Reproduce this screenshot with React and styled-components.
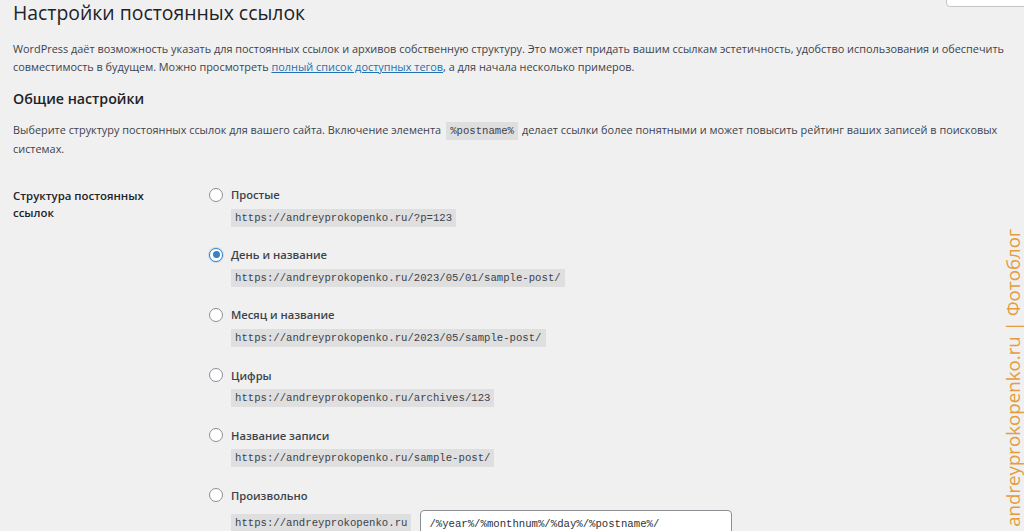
import React from 'react';
import styled, { createGlobalStyle } from 'styled-components';

const COLORS = {
  bg: '#f0f0f1',
  text: '#3c434a',
  heading: '#1d2327',
  link: '#2271b1',
  code: 'rgba(0, 0, 0, 0.07)',
  border: '#8c8f94',
  radio: '#3582c4',
  mark: '#e59c3e',
};

const GlobalStyle = createGlobalStyle`
  html, body {
    margin: 0;
    background: ${COLORS.bg};
  }
  body {
    font-family: "Open Sans", "Noto Sans", sans-serif;
    font-size: 10.9px;
    color: ${COLORS.text};
    overflow: hidden;
  }
`;

const Page = styled.div`
  position: relative;
  height: 531px;
  padding: 1px 18px 0 13px;
  overflow: hidden;
`;

const HelpTab = styled.div`
  position: absolute;
  top: -1px;
  right: -2px;
  width: 78px;
  height: 6px;
  background: #fff;
  border: 1px solid #c3c4c7;
  border-radius: 0 0 0 4px;
`;

const Title = styled.h1`
  margin: 0;
  font-size: 19.4px;
  font-weight: 400;
  line-height: 24px;
  color: ${COLORS.heading};
`;

const Text = styled.p`
  margin: ${({ top = 0 }) => top}px 0 0;
  line-height: 17.5px;
  white-space: nowrap;
`;

const Link = styled.a`
  color: ${COLORS.link};
  text-decoration: underline;
`;

const SubTitle = styled.h2`
  margin: 14px 0 0;
  font-size: 14.2px;
  font-weight: 600;
  line-height: 20px;
  color: ${COLORS.heading};
`;

const Code = styled.code`
  display: inline-block;
  font-family: "Liberation Mono", "DejaVu Sans Mono", monospace;
  font-size: 10.65px;
  line-height: 18px;
  padding: 0 4px;
  background: ${COLORS.code};
  color: ${COLORS.text};
`;

const InlineCode = styled(Code)`
  margin: 0 4px 0 5px;
`;

const FormTable = styled.div`
  display: grid;
  grid-template-columns: 196px 1fr;
  margin-top: 28px;
`;

const FieldLabel = styled.div`
  width: 150px;
  font-weight: 600;
  font-size: 11.4px;
  line-height: 17px;
  color: ${COLORS.heading};
  padding-top: 1px;
`;

const Options = styled.div`
  display: flex;
  flex-direction: column;
`;

const Option = styled.div`
  margin-bottom: 19.2px;
`;

const OptionLabel = styled.label`
  display: flex;
  align-items: center;
  gap: 8px;
  height: 18px;
  font-weight: 600;
  font-size: 11.2px;
  color: ${COLORS.text};
`;

const Radio = styled.span`
  box-sizing: border-box;
  width: 14px;
  height: 14px;
  border-radius: 50%;
  background: #fff;
  border: 1px solid ${({ checked }) => (checked ? COLORS.radio : COLORS.border)};
  display: flex;
  align-items: center;
  justify-content: center;
  box-shadow: ${({ checked }) => (checked ? `0 0 0 1px ${COLORS.radio}33` : 'none')};

  &::before {
    content: '';
    width: 7px;
    height: 7px;
    border-radius: 50%;
    background: ${COLORS.radio};
    display: ${({ checked }) => (checked ? 'block' : 'none')};
  }
`;

const Example = styled.div`
  display: flex;
  align-items: ${({ custom }) => (custom ? 'flex-start' : 'center')};
  gap: 9px;
  padding-left: 22px;
  margin-top: ${({ custom }) => (custom ? 6 : 5)}px;
`;

const CustomCode = styled(Code)`
  margin-top: 4px;
`;

const StructureInput = styled.input`
  box-sizing: border-box;
  width: 312px;
  height: 27px;
  padding: 0 8px;
  background: #fff;
  border: 1px solid ${COLORS.border};
  border-radius: 4px;
  font-family: "Liberation Mono", "DejaVu Sans Mono", monospace;
  font-size: 10.65px;
  color: #2c3338;
  outline: none;
`;

const Watermark = styled.div`
  position: absolute;
  right: 1px;
  bottom: 5px;
  writing-mode: vertical-rl;
  transform: rotate(180deg);
  font-family: "Open Sans", "Noto Sans", sans-serif;
  font-size: 18.7px;
  line-height: 20px;
  color: ${COLORS.mark};
  white-space: nowrap;
`;

const options = [
  { label: 'Простые', url: 'https://andreyprokopenko.ru/?p=123' },
  { label: 'День и название', url: 'https://andreyprokopenko.ru/2023/05/01/sample-post/', checked: true },
  { label: 'Месяц и название', url: 'https://andreyprokopenko.ru/2023/05/sample-post/' },
  { label: 'Цифры', url: 'https://andreyprokopenko.ru/archives/123' },
  { label: 'Название записи', url: 'https://andreyprokopenko.ru/sample-post/' },
];

const App = () => {
  return (
    <Page>
      <GlobalStyle />
      <HelpTab />
      <Title>Настройки постоянных ссылок</Title>
      <Text top={15}>
        WordPress даёт возможность указать для постоянных ссылок и архивов собственную структуру. Это может придать вашим ссылкам эстетичность, удобство использования и обеспечить
        <br />
        совместимость в будущем. Можно просмотреть <Link href="#">полный список доступных тегов</Link>, а для начала несколько примеров.
      </Text>
      <SubTitle>Общие настройки</SubTitle>
      <Text top={12}>
        Выберите структуру постоянных ссылок для вашего сайта. Включение элемента<InlineCode>%postname%</InlineCode>делает ссылки более понятными и может повысить рейтинг ваших записей в поисковых
        <br />
        системах.
      </Text>
      <FormTable>
        <FieldLabel>Структура постоянных ссылок</FieldLabel>
        <Options>
          {options.map((o) => (
            <Option key={o.label}>
              <OptionLabel>
                <Radio checked={o.checked} />
                {o.label}
              </OptionLabel>
              <Example>
                <Code>{o.url}</Code>
              </Example>
            </Option>
          ))}
          <Option>
            <OptionLabel>
              <Radio />
              Произвольно
            </OptionLabel>
            <Example custom>
              <CustomCode>https://andreyprokopenko.ru</CustomCode>
              <StructureInput defaultValue="/%year%/%monthnum%/%day%/%postname%/" />
            </Example>
          </Option>
        </Options>
      </FormTable>
      <Watermark>andreyprokopenko.ru | Фотоблог</Watermark>
    </Page>
  );
};

export default App;
